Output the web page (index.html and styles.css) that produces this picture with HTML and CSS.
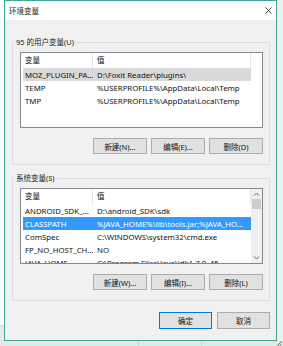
FILE: index.html
```html
<!DOCTYPE html>
<html lang="zh-CN">
<head>
    <meta charset="UTF-8">
    <title>环境变量</title>
    <link rel="stylesheet" href="styles.css">
</head>
<body>
    <div class="screen">
        <div class="side-left"></div>
        <div class="window">
            <div class="titlebar">
                <span class="title">环境变量</span>
                <svg class="close" width="7" height="7" viewBox="0 0 7 7">
                    <path d="M0.5 0.5 L6.5 6.5 M6.5 0.5 L0.5 6.5" stroke="#333" stroke-width="0.9" fill="none"/>
                </svg>
            </div>
            <div class="dialog">
                <fieldset class="group">
                    <legend>95 的用户变量(U)</legend>
                    <div class="list">
                        <div class="list-main">
                            <div class="list-head">
                                <span class="col-name">变量</span>
                                <span class="col-value">值</span>
                            </div>
                            <div class="row row-inactive">
                                <span class="cell-name">MOZ_PLUGIN_PA...</span>
                                <span class="cell-value">D:\Foxit Reader\plugins\</span>
                            </div>
                            <div class="row">
                                <span class="cell-name">TEMP</span>
                                <span class="cell-value">%USERPROFILE%\AppData\Local\Temp</span>
                            </div>
                            <div class="row">
                                <span class="cell-name">TMP</span>
                                <span class="cell-value">%USERPROFILE%\AppData\Local\Temp</span>
                            </div>
                        </div>
                    </div>
                    <div class="buttons">
                        <button class="btn">新建(N)...</button>
                        <button class="btn">编辑(E)...</button>
                        <button class="btn">删除(D)</button>
                    </div>
                </fieldset>

                <fieldset class="group group-system">
                    <legend>系统变量(S)</legend>
                    <div class="list">
                        <div class="list-main">
                            <div class="list-head">
                                <span class="col-name">变量</span>
                                <span class="col-value">值</span>
                            </div>
                            <div class="row">
                                <span class="cell-name">ANDROID_SDK_...</span>
                                <span class="cell-value">D:\android_SDK\sdk</span>
                            </div>
                            <div class="row row-selected">
                                <span class="cell-name">CLASSPATH</span>
                                <span class="cell-value">%JAVA_HOME%\lib\tools.jar;%JAVA_HO...</span>
                            </div>
                            <div class="row">
                                <span class="cell-name">ComSpec</span>
                                <span class="cell-value">C:\WINDOWS\system32\cmd.exe</span>
                            </div>
                            <div class="row">
                                <span class="cell-name">FP_NO_HOST_CH...</span>
                                <span class="cell-value">NO</span>
                            </div>
                            <div class="row">
                                <span class="cell-name">JAVA_HOME</span>
                                <span class="cell-value">C:\Program Files\Java\jdk1.7.0_45</span>
                            </div>
                        </div>
                        <div class="scrollbar">
                            <svg class="arrow" width="11" height="10" viewBox="0 0 11 10">
                                <path d="M3 6.5 L5.5 4 L8 6.5" stroke="#606060" stroke-width="1" fill="none"/>
                            </svg>
                            <div class="thumb"></div>
                            <div class="track"></div>
                            <svg class="arrow" width="11" height="10" viewBox="0 0 11 10">
                                <path d="M3 3.5 L5.5 6 L8 3.5" stroke="#606060" stroke-width="1" fill="none"/>
                            </svg>
                        </div>
                    </div>
                    <div class="buttons">
                        <button class="btn">新建(W)...</button>
                        <button class="btn">编辑(I)...</button>
                        <button class="btn">删除(L)</button>
                    </div>
                </fieldset>

                <div class="footer">
                    <button class="btn btn-default">确定</button>
                    <button class="btn">取消</button>
                </div>
            </div>
        </div>
        <div class="side-right"></div>
        <div class="bottom-strip">
            <span class="strip-cell"></span>
            <span class="strip-cell"></span>
            <span class="strip-cell strip-last"></span>
            <svg class="grip" width="6" height="5" viewBox="0 0 6 5">
                <path d="M1 5 L6 0 M3.5 5 L6 2.5" stroke="#555" stroke-width="0.8"/>
            </svg>
        </div>
    </div>
</body>
</html>
```

FILE: styles.css
```css
body {
    margin: 0;
    padding: 0;
    font-family: "Noto Sans", "Noto Sans CJK SC", sans-serif;
    font-size: 7.5px;
    color: #111;
    background-color: #f0f0f0;
}
.screen {
    width: 283px;
    height: 346px;
    display: grid;
    grid-template-columns: 4px 273px 6px;
    grid-template-rows: 341px 5px;
    overflow: hidden;
}
.side-left {
    background: linear-gradient(#ffffff 325px, #d9d9d9 325px, #d9d9d9 326px, #e9e9e9 326px);
}
.side-right {
    background-color: #efefef;
}
.window {
    box-sizing: border-box;
    border: 1px solid #3fa496;
    background-color: #f0f0f0;
    display: flex;
    flex-direction: column;
}
.titlebar {
    height: 19px;
    background-color: #fff;
    display: flex;
    align-items: center;
    justify-content: space-between;
    padding: 0 4px 0 4px;
}
.title {
    font-size: 7.5px;
    color: #222;
}
.close {
    display: block;
}
.dialog {
    flex: 1;
    padding: 17px 6px 0 7px;
    display: flex;
    flex-direction: column;
}
.group {
    margin: 0;
    min-width: 0;
    border: 1px solid #dcdcdc;
    padding: 5px 6px 10px 7px;
}
.group legend {
    padding: 0 2px;
    margin-left: -6px;
    line-height: 10px;
    color: #222;
}
.group-system {
    margin-top: 8px;
}
.list {
    height: 76px;
    box-sizing: border-box;
    border: 1px solid #828790;
    background-color: #fff;
    display: flex;
    overflow: hidden;
}
.list-main {
    flex: 1;
    min-width: 0;
}
.list-head {
    height: 15px;
    display: flex;
    align-items: center;
}
.col-name, .col-value {
    box-sizing: border-box;
    height: 15px;
    line-height: 15px;
    padding-left: 4px;
    border-right: 1px solid #e5e5e5;
}
.col-name {
    width: 72px;
}
.col-value {
    width: 158px;
}
.row {
    width: 228px;
    height: 13px;
    margin-left: 2px;
    display: flex;
    align-items: center;
    white-space: nowrap;
    font-size: 7.8px;
}
.cell-name {
    box-sizing: border-box;
    width: 70px;
    padding-left: 2px;
    overflow: hidden;
}
.cell-value {
    padding-left: 4px;
    overflow: hidden;
}
.row-inactive {
    background-color: #d9d9d9;
}
.row-selected {
    background-color: #3399ff;
    color: #fff;
}
.scrollbar {
    width: 11px;
    background-color: #f0f0f0;
    display: flex;
    flex-direction: column;
}
.arrow {
    display: block;
}
.thumb {
    height: 10px;
    margin: 0 1px;
    background-color: #cdcdcd;
}
.track {
    flex: 1;
}
.buttons {
    margin-top: 10px;
    display: flex;
    justify-content: flex-end;
    gap: 4px;
}
.btn {
    box-sizing: border-box;
    width: 54px;
    height: 16px;
    padding: 0;
    font-family: inherit;
    font-size: 7.5px;
    color: #111;
    background-color: #e1e1e1;
    border: 1px solid #adadad;
}
.footer {
    margin-top: 11px;
    display: flex;
    justify-content: flex-end;
    gap: 5px;
}
.footer .btn {
    width: 53px;
    height: 17px;
}
.btn-default {
    border-color: #0078d7;
}
.bottom-strip {
    grid-column: 1 / 4;
    display: flex;
    background-color: #e6e6e6;
}
.strip-cell {
    width: 62px;
    border-right: 1px solid #d2d2d2;
}
.strip-cell:first-child {
    width: 138px;
}
.strip-last {
    flex: 1;
    border-right: none;
}
.grip {
    display: block;
    margin-right: 1px;
}
```
